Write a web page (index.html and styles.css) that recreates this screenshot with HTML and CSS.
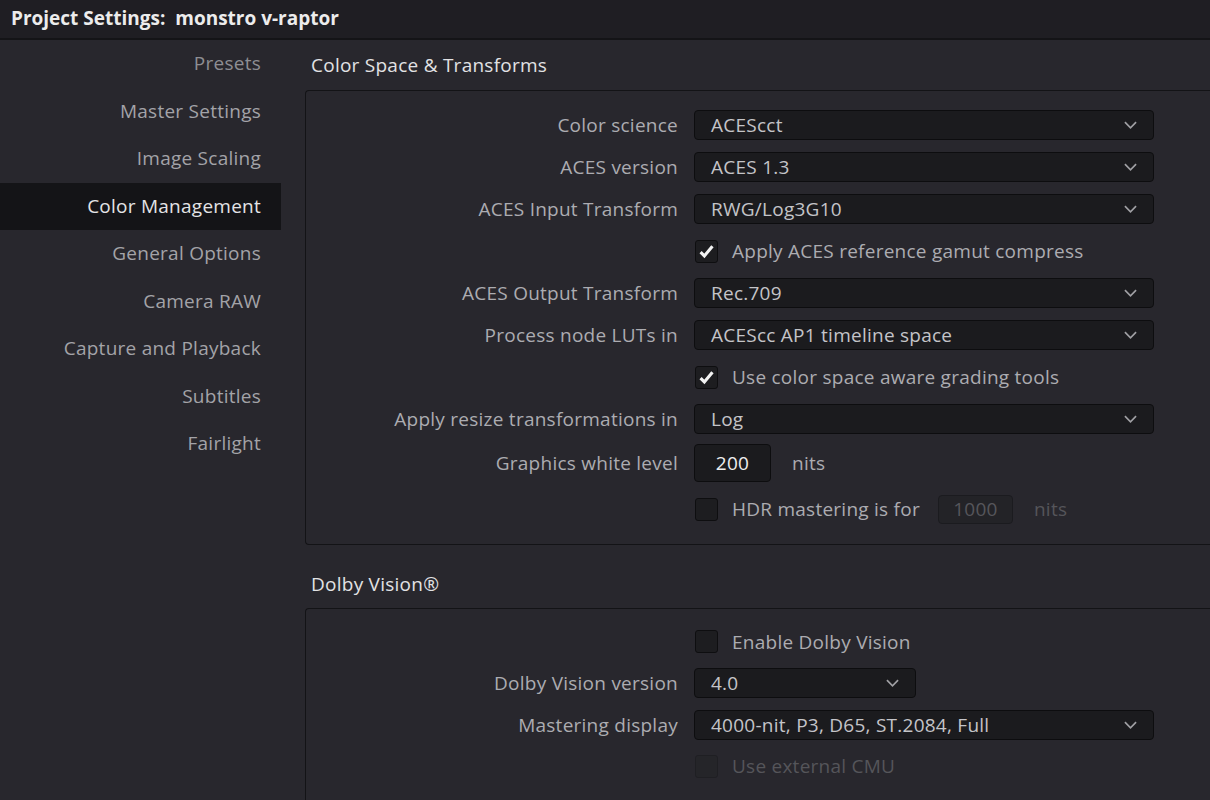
FILE: index.html
```html
<!DOCTYPE html>
<html lang="en">
<head>
    <meta charset="UTF-8">
    <title>Project Settings</title>
    <link rel="stylesheet" href="styles.css">
</head>
<body>
    <div class="titlebar">Project Settings:&nbsp; monstro v-raptor</div>

    <div class="layout">
        <ul class="sidebar">
            <li class="dim">Presets</li>
            <li>Master Settings</li>
            <li>Image Scaling</li>
            <li class="active">Color Management</li>
            <li>General Options</li>
            <li>Camera RAW</li>
            <li>Capture and Playback</li>
            <li>Subtitles</li>
            <li>Fairlight</li>
        </ul>

        <div class="main">
            <div class="section-title">Color Space &amp; Transforms</div>
            <div class="group">
                <div class="row">
                    <label>Color science</label>
                    <div class="select"><span>ACEScct</span><svg class="chev" viewBox="0 0 14 8"><path d="M1 1l6 6 6-6"/></svg></div>
                </div>
                <div class="row">
                    <label>ACES version</label>
                    <div class="select"><span>ACES 1.3</span><svg class="chev" viewBox="0 0 14 8"><path d="M1 1l6 6 6-6"/></svg></div>
                </div>
                <div class="row">
                    <label>ACES Input Transform</label>
                    <div class="select"><span>RWG/Log3G10</span><svg class="chev" viewBox="0 0 14 8"><path d="M1 1l6 6 6-6"/></svg></div>
                </div>
                <div class="row">
                    <label></label>
                    <div class="check checked"><svg viewBox="0 0 16 16"><path d="M3 8.5l3.2 3.2L13 3.5"/></svg></div>
                    <span class="check-text">Apply ACES reference gamut compress</span>
                </div>
                <div class="row">
                    <label>ACES Output Transform</label>
                    <div class="select"><span>Rec.709</span><svg class="chev" viewBox="0 0 14 8"><path d="M1 1l6 6 6-6"/></svg></div>
                </div>
                <div class="row">
                    <label>Process node LUTs in</label>
                    <div class="select"><span>ACEScc AP1 timeline space</span><svg class="chev" viewBox="0 0 14 8"><path d="M1 1l6 6 6-6"/></svg></div>
                </div>
                <div class="row">
                    <label></label>
                    <div class="check checked"><svg viewBox="0 0 16 16"><path d="M3 8.5l3.2 3.2L13 3.5"/></svg></div>
                    <span class="check-text">Use color space aware grading tools</span>
                </div>
                <div class="row">
                    <label>Apply resize transformations in</label>
                    <div class="select"><span>Log</span><svg class="chev" viewBox="0 0 14 8"><path d="M1 1l6 6 6-6"/></svg></div>
                </div>
                <div class="row tall">
                    <label>Graphics white level</label>
                    <div class="num">200</div>
                    <span class="unit">nits</span>
                </div>
                <div class="row tall">
                    <label></label>
                    <div class="check"></div>
                    <span class="check-text">HDR mastering is for</span>
                    <div class="num small disabled">1000</div>
                    <span class="unit disabled-text">nits</span>
                </div>
            </div>

            <div class="section-title second">Dolby Vision®</div>
            <div class="group dolby">
                <div class="row">
                    <label></label>
                    <div class="check"></div>
                    <span class="check-text">Enable Dolby Vision</span>
                </div>
                <div class="row">
                    <label>Dolby Vision version</label>
                    <div class="select short"><span>4.0</span><svg class="chev" viewBox="0 0 14 8"><path d="M1 1l6 6 6-6"/></svg></div>
                </div>
                <div class="row">
                    <label>Mastering display</label>
                    <div class="select"><span>4000-nit, P3, D65, ST.2084, Full</span><svg class="chev" viewBox="0 0 14 8"><path d="M1 1l6 6 6-6"/></svg></div>
                </div>
                <div class="row">
                    <label></label>
                    <div class="check disabled"></div>
                    <span class="check-text disabled-text">Use external CMU</span>
                </div>
            </div>
        </div>
    </div>
</body>
</html>
```

FILE: styles.css
```css
body {
    margin: 0;
    background-color: #28272d;
    font-family: "Open Sans", "Noto Sans", sans-serif;
    font-size: 19px;
    letter-spacing: 0.25px;
    color: #acacb1;
    overflow: hidden;
    height: 800px;
}
.titlebar {
    height: 38px;
    line-height: 36px;
    padding-left: 11px;
    background-color: #1f1e23;
    border-bottom: 2px solid #141417;
    color: #ececec;
    font-weight: bold;
    letter-spacing: 0;
}
.layout {
    display: flex;
}
.sidebar {
    list-style: none;
    margin: 0;
    padding: 0;
    width: 281px;
    flex-shrink: 0;
}
.sidebar li {
    height: 47.5px;
    line-height: 47px;
    text-align: right;
    padding-right: 20px;
    color: #a3a3a8;
}
.sidebar li.dim {
    color: #8e8e93;
}
.sidebar li.active {
    background-color: #141417;
    color: #e4e4e6;
}
.main {
    flex: 1;
    margin-left: 24px;
}
.section-title {
    height: 50px;
    display: flex;
    align-items: center;
    padding-left: 6px;
    color: #e2e2e4;
}
.section-title.second {
    margin-top: 14px;
    height: 49px;
}
.group {
    border: 1px solid #131316;
    border-right: none;
    border-radius: 4px 0 0 4px;
    padding: 13px 0 12px 0;
}
.group.dolby {
    padding-top: 12px;
    padding-bottom: 40px;
}
.group.dolby .row {
    height: 41.5px;
}
.row {
    display: flex;
    align-items: center;
    height: 42px;
}
.row.tall {
    height: 46px;
}
.row label {
    width: 372px;
    margin-right: 16px;
    text-align: right;
    flex-shrink: 0;
}
.select {
    width: 426px;
    height: 28px;
    background-color: #1b1b1e;
    border: 1px solid #0d0d0f;
    border-radius: 4px;
    display: flex;
    align-items: center;
    justify-content: space-between;
    padding: 0 16px 0 16px;
    color: #c4c4c8;
}
.select.short {
    width: 188px;
}
.chev {
    width: 13px;
    height: 8px;
    fill: none;
    stroke: #a0a0a4;
    stroke-width: 1.8;
}
.check {
    width: 21px;
    height: 21px;
    background-color: #1d1d20;
    border: 1px solid #0e0e10;
    border-radius: 3px;
    margin-left: 1px;
    display: flex;
    align-items: center;
    justify-content: center;
}
.check svg {
    width: 19px;
    height: 19px;
    fill: none;
    stroke: #f2f2f2;
    stroke-width: 2.6;
}
.check.disabled {
    background-color: #252529;
    border-color: #1f1f23;
}
.check-text {
    margin-left: 14px;
}
.num {
    width: 75px;
    height: 36px;
    background-color: #1b1b1e;
    border: 1px solid #0d0d0f;
    border-radius: 4px;
    display: flex;
    align-items: center;
    justify-content: center;
    color: #eeeeee;
}
.num.small {
    width: 73px;
    height: 27px;
    margin-left: 18px;
}
.num.disabled {
    background-color: #232327;
    border-color: #1b1b1f;
    color: #56565b;
}
.unit {
    margin-left: 21px;
}
.disabled-text {
    color: #55555a;
}
```
